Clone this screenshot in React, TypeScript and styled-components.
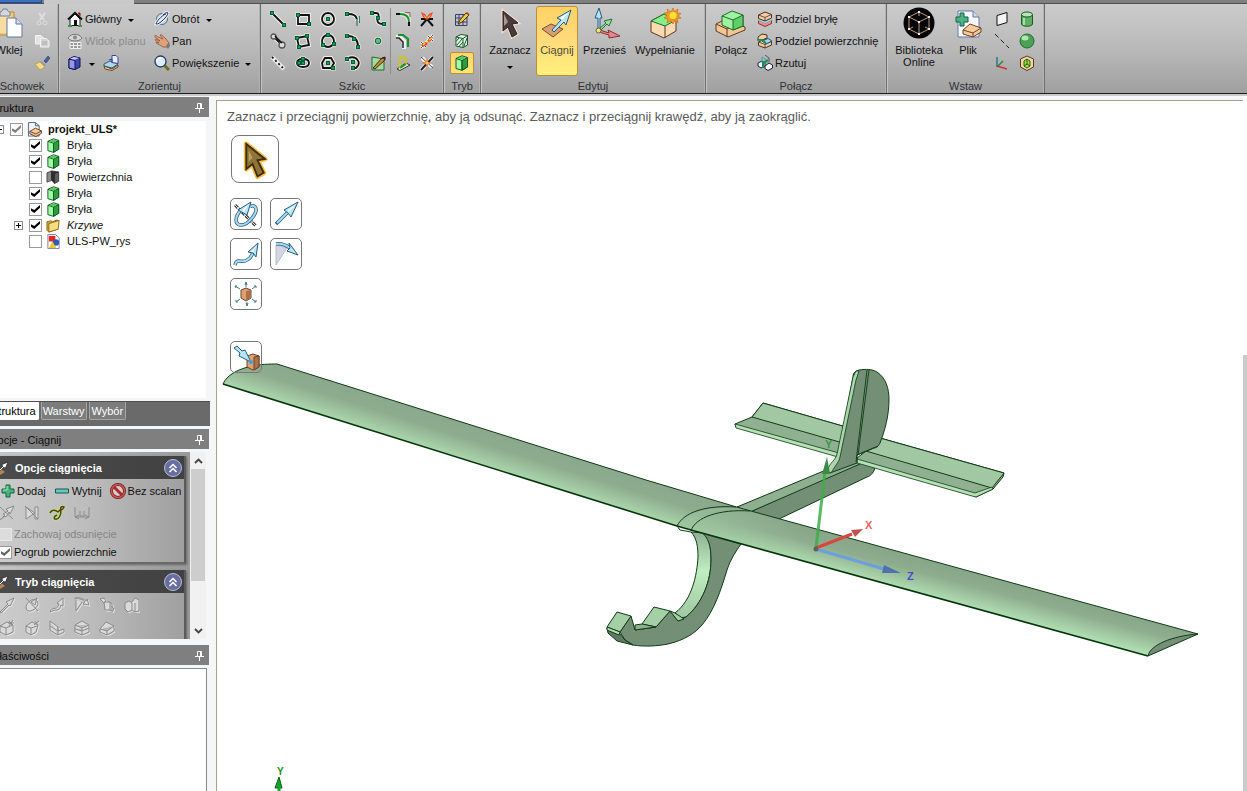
import React from "react";
import styled, { createGlobalStyle, css } from "styled-components";

const GlobalStyle = createGlobalStyle`
  * { box-sizing: border-box; }
  body { margin: 0; overflow: hidden; background: #f5f6f8; }
  button, input { font: inherit; color: inherit; margin: 0; }
`;

/* ---------- window ---------- */

const bleed = 14;

const Shell = styled.div`
  display: flex;
  flex-direction: column;
  height: 100vh;
  width: calc(100% + ${bleed}px);
  margin-left: -${bleed}px;
  font: 11px/14px "Liberation Sans", Arial, sans-serif;
  color: #111;
  background: #f5f6f8;
`;

const TabStrip = styled.div`
  display: flex;
  flex: none;
  gap: 2px;
  height: 4px;
  background: #7f7f7f;
  border-bottom: 1px solid #505050;
`;
const AppTab = styled.span`
  width: 56px;
  background: #3a70c0;
  border-bottom: 1px solid #1d4a92;
  border-right: 1px solid #1d4a92;
`;
const ActiveTab = styled.span`
  width: 90px;
  height: 4px;
  background: #c9c9c9;
`;

/* ---------- ribbon ---------- */

const RibbonBar = styled.header`
  display: flex;
  flex: none;
  height: 90px;
  background: linear-gradient(#cbcbcb, #b9b9b9 50%, #a0a0a0);
  border-bottom: 1px solid #1c1c1c;
`;
const Group = styled.section<{ $w: number }>`
  display: flex;
  flex-direction: column;
  flex: none;
  width: ${(p) => p.$w}px;
  border-right: 1px solid #6d6d6d;
  box-shadow: inset -2px 0 0 -1px #b4b4b4, inset 1px 0 0 #c6c6c6;
`;
const GroupBody = styled.div<{ $pad?: number }>`
  display: flex;
  flex: none;
  height: 74px;
  padding: 4px 0 0 ${(p) => p.$pad ?? 0}px;
`;
const GroupLabel = styled.h2`
  margin: 0;
  font-size: 11px;
  font-weight: 400;
  line-height: 17px;
  text-align: center;
  color: #2e3136;
`;
const bare = css`
  display: flex;
  align-items: center;
  padding: 0;
  border: 0;
  background: none;
  white-space: nowrap;
`;
const Column = styled.div<{ $w?: number }>`
  display: flex;
  flex-direction: column;
  flex: none;
  width: ${(p) => (p.$w ? p.$w + "px" : "auto")};
`;
const RowButton = styled.button`
  ${bare}
  gap: 2px;
  height: 22px;
  &:disabled { color: #8b8b8b; }
`;
const InlineRow = styled.div`
  display: flex;
  gap: 8px;
  height: 22px;
`;
const CellGrid = styled.div<{ $cols: number; $cell: number }>`
  display: grid;
  grid-template-columns: repeat(${(p) => p.$cols}, ${(p) => p.$cell}px);
  grid-auto-rows: 22px;
`;
const CellButton = styled.button<{ $on?: boolean }>`
  ${bare}
  justify-content: center;
  ${(p) =>
    p.$on &&
    css`
      border: 1px solid #b98f3a;
      border-radius: 2px;
      background: linear-gradient(#ffd470, #ffe476);
    `}
`;
const Rule = styled.span`
  width: 1px;
  height: 66px;
  background: #8e8e8e;
`;
const BigButton = styled.button<{ $w: number; $on?: boolean }>`
  ${bare}
  flex: none;
  flex-direction: column;
  align-self: flex-start;
  width: ${(p) => p.$w}px;
  height: 70px;
  margin-top: -2px;
  border: 1px solid transparent;
  border-radius: 3px;
  line-height: 12px;
  gap: 2px;
  ${(p) =>
    p.$on &&
    css`
      border-color: #c08e32;
      background: linear-gradient(#ffd266, #ffd97a 45%, #fff07c);
      color: #4e4a3c;
    `}
`;
const BigLabel = styled.span`
  padding-top: 3px;
  text-align: center;
`;
const Arrow = styled.i`
  width: 0;
  height: 0;
  margin: 2px 0 0 4px;
  border: 3px solid transparent;
  border-top-color: #000;
  border-bottom: 0;
`;
const DownArrow = styled(Arrow)`
  margin: 8px 0 0;
`;

/* ---------- work area ---------- */

const Work = styled.div`
  display: grid;
  grid-template-columns: 224px minmax(0, 1fr) 4px;
  flex: 1;
  min-height: 0;
  border-top: 2px solid #c9c9c9;
  background: #f5f6f8;
`;
const Side = styled.aside`
  display: flex;
  flex-direction: column;
  min-height: 0;
  padding-top: 1px;
`;
const PanelHead = styled.div`
  display: flex;
  flex: none;
  align-items: center;
  justify-content: space-between;
  height: 20px;
  margin-right: 1px;
  padding: 2px 5px 0 3px;
  background: #7f7f7f;
  color: #0c0c0c;
`;
const HeadTitle = styled.h2`
  margin: 0;
  font-size: 11px;
  font-weight: 400;
`;
const PinButton = styled.button`
  ${bare}
`;
const Tree = styled.ul`
  flex: none;
  height: 277px;
  margin: 4px 4px 3px 0;
  padding: 0;
  background: #fff;
  list-style: none;
`;
const TreeRow = styled.li<{ $depth: number }>`
  display: flex;
  align-items: center;
  height: 16px;
  padding-left: ${(p) => (p.$depth ? 28 : 9)}px;
`;
const Expander = styled.button<{ $open?: boolean }>`
  ${bare}
  flex: none;
  justify-content: center;
  width: 9px;
  height: 9px;
  margin-right: 6px;
  border: 1px solid #8d8d8d;
  background:
    linear-gradient(#000, #000) center / 5px 1px no-repeat,
    linear-gradient(#000, #000) center / 1px ${(p) => (p.$open ? 1 : 5)}px no-repeat,
    #fff;
`;
const ExpanderGap = styled.span`
  flex: none;
  width: 15px;
`;
const Tick = styled.input.attrs({ type: "checkbox" })<{ $tone?: string }>`
  appearance: none;
  display: grid;
  flex: none;
  place-items: center;
  width: 13px;
  height: 13px;
  border: 1px solid #9a9a9a;
  background: #fff;
  &:checked::before {
    content: "";
    width: 9px;
    height: 8px;
    background: ${(p) => p.$tone ?? "#000"};
    clip-path: polygon(0 40%, 0 72%, 36% 100%, 100% 34%, 100% 0, 36% 62%);
  }
  &:disabled { background: #dcdcdc; border-color: #e8e8e8; }
`;
const NodeLabel = styled.label<{ $look?: "bold" | "italic" }>`
  display: flex;
  align-items: center;
  gap: 6px;
  margin-left: 4px;
  font-weight: ${(p) => (p.$look === "bold" ? 700 : 400)};
  font-style: ${(p) => (p.$look === "italic" ? "italic" : "normal")};
`;
const Tabs = styled.div`
  display: flex;
  flex: none;
  align-items: flex-start;
  gap: 2px;
  height: 25px;
  background: #6a6a6a;
  border-top: 1px solid #4e4e4e;
  margin-bottom: 3px;
`;
const Tab = styled.button<{ $on?: boolean }>`
  ${bare}
  height: 18px;
  padding: 0 2px 0 1px;
  border: 1px solid ${(p) => (p.$on ? "#fff" : "#a5a5a5")};
  border-top: 0;
  border-radius: 0 0 2px 2px;
  background: ${(p) => (p.$on ? "#fff" : "#7c7c7c")};
  color: ${(p) => (p.$on ? "#000" : "#fff")};
  &:first-child { padding-left: 4px; }
`;
const Options = styled.div`
  display: flex;
  flex: none;
  height: 187px;
  margin: 3px 4px 6px 0;
  overflow: hidden;
`;
const Cards = styled.div`
  display: flex;
  flex: 1;
  flex-direction: column;
  gap: 6px;
  min-width: 0;
  padding: 4px 4px 0 0;
  background: linear-gradient(90deg, #c9c9c9, #999);
`;
const Card = styled.section`
  flex: none;
  border-right: 2px solid #5b5b5b;
  border-bottom: 2px solid #6a6a6a;
  box-shadow: 1px 1px 2px #666;
  background: linear-gradient(90deg, #cdcdcd, #bdbdbd 50%, #a0a0a0);
`;
const CardHead = styled.header`
  display: flex;
  align-items: center;
  gap: 6px;
  height: 23px;
  padding: 0 2px 0 9px;
  background: linear-gradient(90deg, #4c4c4c, #414141);
  color: #fff;
`;
const CardTitle = styled.h3`
  flex: 1;
  margin: 0;
  font-size: 11px;
  font-weight: 700;
`;
const FoldButton = styled.button`
  ${bare}
  justify-content: center;
  width: 18px;
  height: 18px;
  border: 1px solid #b9bdd8;
  border-radius: 50%;
  background: #676f9f;
`;
const CardBody = styled.div`
  padding: 1px 0 1px 13px;
`;
const OptionRow = styled.div`
  display: flex;
  gap: 8px;
  height: 22px;
  padding-left: 2px;
`;
const IconRow = styled.div`
  display: flex;
  gap: 9px;
  height: 23px;
`;
const CheckRow = styled.label<{ $off?: boolean }>`
  display: flex;
  align-items: center;
  gap: 2px;
  height: 18px;
  color: ${(p) => (p.$off ? "#868686" : "#111")};
`;
const ScrollTrack = styled.div`
  display: flex;
  flex: none;
  flex-direction: column;
  justify-content: space-between;
  width: 16px;
  background: #f1f1f1;
`;
const ScrollButton = styled.button`
  ${bare}
  justify-content: center;
  height: 17px;
`;
const ScrollThumb = styled.div`
  flex: none;
  height: 112px;
  margin: 0 1px auto 1px;
  background: #cdcdcd;
`;
const Properties = styled.div`
  flex: 1;
  margin: 3px 3px 0 0;
  border: 1px solid #8a8a8a;
  border-bottom: 0;
  background: #fff;
`;

/* ---------- viewport ---------- */

const Viewport = styled.main`
  position: relative;
  display: flex;
  flex-direction: column;
  align-items: flex-start;
  min-width: 0;
  margin: 4px 0 0 6px;
  padding: 8px 0 0 13px;
  border: 1px solid #a5a38e;
  border-width: 1px 0 0 1px;
  background: #fff;
  overflow: hidden;
`;
const Model = styled.svg`
  position: absolute;
  top: 0;
  left: 0;
`;
const Hint = styled.p`
  position: relative;
  margin: 0 0 10px -3px;
  font-size: 13px;
  line-height: 16px;
  white-space: nowrap;
  color: #5b5b5b;
`;
const Tools = styled.div`
  position: relative;
  display: grid;
  grid-template-columns: 32px 32px;
  gap: 8px;
  margin-top: 15px;
`;
const ToolButton = styled.button<{ $large?: boolean }>`
  ${bare}
  position: relative;
  justify-content: center;
  width: ${(p) => (p.$large ? 48 : 32)}px;
  height: ${(p) => (p.$large ? 48 : 32)}px;
  margin-left: ${(p) => (p.$large ? 1 : 0)}px;
  border: 1px solid #777;
  border-radius: ${(p) => (p.$large ? 8 : 5)}px;
`;
const UpTo = styled.div`
  margin-top: 31px;
`;
const PageScroll = styled.div`
  padding-top: 259px;
  background: #fff;
  &::after {
    content: "";
    display: block;
    height: 100%;
    background: #cbcbcb;
  }
`;

/* ---------- icons ---------- */

type IconProps = { s?: number; h?: number; vb?: number; children: React.ReactNode };
const Icon = ({ s = 16, h, vb, children }: IconProps) => (
  <svg width={s} height={h ?? s} viewBox={`0 0 ${vb ?? s} ${vb ?? h ?? s}`} fill="none" aria-hidden="true">
    {children}
  </svg>
);

/* black stroke with a pale outline and green handles */
const Sketch = ({ d, dots = [], dash, children }: { d?: string; dots?: number[][]; dash?: string; children?: React.ReactNode }) => (
  <Icon>
    {d && <path d={d} stroke="#ececec" strokeWidth="4" />}
    {dots.map(([x, y]) => (
      <rect key={`h${x},${y}`} x={x - 2.5} y={y - 2.5} width="5" height="5" fill="#eee" />
    ))}
    {d && <path d={d} stroke="#111" strokeWidth="1.8" strokeDasharray={dash} />}
    {dots.map(([x, y]) => (
      <rect key={`${x},${y}`} x={x - 1.5} y={y - 1.5} width="3" height="3" fill="#13a05b" stroke="#075c38" />
    ))}
    {children}
  </Icon>
);

const GreenBox = ({ s = 16 }: { s?: number }) => (
  <Icon s={s} vb={16}>
    <path d="M2 3.500 8 .8 13.500 2.500V12L8 15.300 2 13.500Z" fill="#a2fba2" stroke="#0c5a22" strokeLinejoin="round" />
    <path d="M8 5.500 13.500 2.500V12L8 15.300Z" fill="#319b3d" stroke="#0c5a22" strokeLinejoin="round" />
    <path d="M2 3.500 8 5.500V15" stroke="#0c5a22" />
    <path d="M3.300 3.500 8 1.500 12.200 2.700 8 4.800Z" fill="#56c75f" />
  </Icon>
);

const PlusIcon = () => (
  <Icon s={14}>
    <path d="M5 1h4v4h4v4H9v4H5V9H1V5h4Z" fill="#4db37e" stroke="#0d6244" />
    <path d="M6 2v4H2" stroke="#a9e5c0" />
  </Icon>
);

const PinIcon = () => (
  <Icon s={9} h={10}>
    <path d="M2.500 5.500V.5h4v5M0 5.500h9M4.500 5.500V10M5.500 1v4" stroke="#fff" />
  </Icon>
);

const HeaderArrow = () => (
  <Icon s={14}>
    <path d="M0 9 5 7 10 11 5 14 0 13Z" fill="#b38359" />
    <path d="M2 11 8 5 6 4 13 1 10 8 9 6 3 12Z" fill="#fff" stroke="#111" strokeWidth=".6" />
  </Icon>
);

const Chevrons = () => (
  <Icon s={10}>
    <path d="M1.500 5 5 1.500 8.500 5M1.500 9 5 5.500 8.500 9" stroke="#fff" strokeWidth="1.500" />
  </Icon>
);

const blue = { fill: "#b5e6f7", stroke: "#2b5c80", strokeWidth: 1, strokeLinejoin: "round" as const };
const grey = { stroke: "#8b8b8b", strokeWidth: 1, fill: "#dadada", strokeLinejoin: "round" as const };

const cursorPath = "M9 4 24 16 18 17 23 27 18 30 14 20 9 24Z";

const sketchTools: [string, React.ReactNode][] = [
  ["Linia", <Sketch d="M3 3 13 13" dots={[[2, 2], [14, 14]]} />],
  ["Prostokąt", <Sketch d="M3 4H14V13H3Z" dots={[[3, 4], [14, 13]]} />],
  ["Okrąg", <Sketch d="M8 2A6 6 0 1 1 8 14A6 6 0 1 1 8 2Z" dots={[[8, 8]]} />],
  ["Łuk styczny", <Sketch d="M3 3C8 3 12 4 12 10" dots={[[2, 3]]}><path d="M12 8v7" stroke="#888" strokeWidth="2" /><path d="M14.500 5v7" stroke="#178d55" /></Sketch>],
  ["Splajn", <Sketch d="M3 2H6C9 2 9 4 8 7S7 13 13 13" dots={[[2, 2], [8, 7], [14, 13]]} />],
  ["Linia styczna", <Sketch d="M4 4 12 12"><circle cx="3.500" cy="3.500" r="2.500" fill="#ddd" stroke="#555" strokeWidth="1.300" /><circle cx="12" cy="12" r="3" stroke="#555" fill="#ddd" strokeWidth="1.300" /><path d="M5 3 12 10" stroke="#111" strokeWidth="1.500" /></Sketch>],
  ["Prostokąt trójpunktowy", <Sketch d="M2 5 12 3 14 12 4 14Z" dots={[[2, 5], [12, 3], [4, 14]]} />],
  ["Okrąg trójpunktowy", <Sketch d="M8 2A6 6 0 1 1 8 14A6 6 0 1 1 8 2Z" dots={[[8, 2], [3, 12], [14, 11]]} />],
  ["Łuk trójpunktowy", <Sketch d="M3 3C9 3 13 7 13 13" dots={[[2, 3], [9, 6], [13, 14]]} />],
  ["Punkt", <Sketch><circle cx="8" cy="8" r="4" fill="#ddd" /><circle cx="8" cy="8" r="2.800" fill="#62bd7d" stroke="#08633c" /></Sketch>],
  ["Linia konstrukcyjna", <Sketch d="M2 2 14 14" dash="2 2.500" />],
  ["Elipsa", <Sketch d="M8 4C16 4 16 12 8 12S0 4 8 4Z" dots={[[8, 4], [4, 8], [8, 8]]} />],
  ["Wielokąt", <Sketch d="M2 8 5 3H11L14 8 11 13H3Z" dots={[[8, 8], [13, 13]]} />],
  ["Łuk wymiatany", <Sketch d="M3 3C12 0 17 8 11 13H8" dots={[[2, 4], [8, 7], [8, 13]]} />],
  ["Płaszczyzna", <Sketch><path d="M2 2 14 4V15H2Z" fill="#a9d8a4" stroke="#226b2b" /><path d="M3 13 12 3 15 3 14 6 5 14Z" fill="#b7922f" stroke="#3a2b0a" /><path d="m12 3 3-1v3" fill="#7c2222" stroke="#501010" /></Sketch>],
];

const trimTools: [string, React.ReactNode][] = [
  ["Zaokrąglij narożnik", <Icon><path d="M1 3H5M14 11v4" stroke="#111" strokeWidth="2" /><path d="M5 3C11 3 14 6 14 11" stroke="#e5eee5" strokeWidth="4" /><path d="M5 3C11 3 14 6 14 11" stroke="#179327" strokeWidth="2" /><path d="M10 1.500h5V6" stroke="#a45c5c" /></Icon>],
  ["Przytnij", <Icon><path d="M2 15 8 8 14 15M2 8 8 8 14 8" stroke="#111" strokeWidth="2" /><path d="m2 1 4 2 2 3 2-3 4-2-2 5-4 3-4-3Z" fill="#f0432a" /><path d="m4 3 4 4 4-4-2 4H6Z" fill="#ffc53c" /></Icon>],
  ["Odsuń krzywą", <Icon><path d="M1 4H5L9 8V16" stroke="#eee" strokeWidth="4" /><path d="M1 5H4L8 9V15" stroke="#222" strokeWidth="1.500" /><path d="M3 2H8L13 6V14" stroke="#189032" strokeWidth="2.200" /></Icon>],
  ["Rozdziel", <Icon><path d="m2 9 5 5M9 3l5 5M2 15 14 2" stroke="#eee" strokeWidth="3" /><path d="m2 9 5 5M9 3l5 5M2 15 14 2" stroke="#555" /><path d="m2 12 4-3 2 1 2-5 4-1-2 4-3 1-1 3-4 2Z" fill="#ef4927" /><path d="m4 12 2-2M10 7l3-2M7 9l2-1" stroke="#ffd340" strokeWidth="1.500" /></Icon>],
  ["Rzutuj na szkic", <Icon><path d="m2 14 3 1.500 10-5.500-4-2Z" fill="#dff2da" stroke="#333" /><path d="M5 1v12" stroke="#d6c500" strokeWidth="2" /><path d="M5 13 11 9" stroke="#1b9a33" strokeWidth="2" /><path d="m6 1 5 3v5" stroke="#d6c500" strokeWidth="1.500" /></Icon>],
  ["Podziel krzywą", <Icon><path d="M2 15 14 2M3 3l10 9" stroke="#eee" strokeWidth="4" /><path d="M2 15 14 2" stroke="#222" strokeWidth="2" /><path d="M2 2l12 11" stroke="#555" /><path d="m8 3 1 4 4 1-4 1-1 4-1-4-4-1 4-1Z" fill="#f4462b" /><circle cx="8" cy="8" r="1.800" fill="#ffc72e" /></Icon>],
];

const BoxSmall = ({ y = 0, fill = "#f3cda4" }: { y?: number; fill?: string }) => (
  <g transform={`translate(0 ${y})`}>
    <path d="M1.500 4 8 1 14.500 3.500V7L8 10 1.500 7.500Z" fill={fill} stroke="#4b3020" strokeLinejoin="round" />
    <path d="M1.500 4 8 6.500 14.500 3.500M8 6.500V10" stroke="#4b3020" strokeWidth=".8" />
  </g>
);

const splits: [string, React.ReactNode][] = [
  ["Podziel bryłę", <Icon><path d="M1.500 9 8 12 14.500 9V12.500L8 15.500 1.500 12.500Z" fill="#ee8c87" stroke="#8f2f33" /><path d="M1.500 8 8 11 14.500 8" stroke="#8fd4f2" strokeWidth="2.500" /><BoxSmall /></Icon>],
  ["Podziel powierzchnię", <Icon><BoxSmall y={5} /><path d="M5 8 11 5.500 15 8 9 11Z" fill="#9dd7f4" stroke="#245d7d" /><path d="M1 4 5 1 10 2 10 5 5 7 1 6.500Z" fill="#f3cda4" stroke="#4b3020" /><path d="M0 7h6l3 3" stroke="#159740" strokeWidth="1.500" /></Icon>],
  ["Rzutuj", <Icon><path d="M1 8 5 6 8 8V11L4 13 1 11ZM8 11 12 8 15.500 10V13L11 15.500 8 13.500Z" fill="#f3f3f3" stroke="#1d1d45" /><path d="M5 2v6M5 2l6 4M5 8l6-1" stroke="#35a7d2" /><path d="M6 13V8l5-3" stroke="#16923c" strokeWidth="2" /><path d="m8 0 4 3v4" stroke="#555" /></Icon>],
];

/* faint icons of the disabled option buttons */
const ghostPaths = [
  "M1 15 9 7 7 5 15 1 11 9 10 8 2 16Z",
  "M2 1 14 14M3 13C-1 8 9-1 13 4S6 17 3 13ZM7 5 13 1 11 8Z",
  "M1 14C5 9 8 14 10 7L8 6 14 1V9L12 8C10 16 6 11 2 15Z",
  "M1 2C6 1 9 3 11 5L9 7 15 8 13 2 12 4C8 1 4 0 1 1ZM2 3V14L8 5",
  "M1 2 5 1 7 4 5 6ZM5 5h6v8H6ZM11 5l2 2v7l-2-1M12 9l3 3-2 3",
  "M1 6 5 4 8 6V13L4 15 1 12ZM8 5 11 1 15 3V14L11 15 8 13M11 6V15",
  "M1 6 8 2 14 5V12L7 15 1 12ZM1 6 7 8V15M7 8 14 5M10 1l4 4M14 0l-4 6M9 3h6",
  "M2 6 8 2 14 5 12 12 7 15 2 12ZM2 6 7 8V15M7 8 13 6M11 1l3 4M15 1l-5 4",
  "M1 1V10L9 15 15 12V9L9 11 1 6M1 1 9 7V15M9 7V11",
  "M1 5 8 1 15 5V12L8 15 1 12ZM1 5 8 8 15 5M8 8V15M1 9 8 11 15 8",
  "M1 9 7 2 15 6V11L8 15 1 12ZM1 9 8 11 15 6M8 11V15",
];
const Ghost = ({ n }: { n: number }) => (
  <Icon>
    <path d={ghostPaths[n]} transform="translate(1 1)" stroke="#e6e6e6" />
    <path d={ghostPaths[n]} {...grey} />
  </Icon>
);

/* ---------- model ---------- */

const edge = "#113b16";
const dark = "#738f76";

const Airplane = () => (
  <Model width="1026" height="690" viewBox="217 101 1026 690" role="img" aria-label="projekt_ULS">
    <defs>
      <linearGradient id="leftWing" gradientUnits="userSpaceOnUse" x1="400" y1="402" x2="389" y2="437">
        <stop offset="0" stopColor="#8ba88c" />
        <stop offset=".4" stopColor="#8dac8e" />
        <stop offset="1" stopColor="#add8ae" />
      </linearGradient>
      <linearGradient id="rightWing" gradientUnits="userSpaceOnUse" x1="900" y1="552" x2="891" y2="586">
        <stop offset="0" stopColor="#87a588" />
        <stop offset=".4" stopColor="#8dad8e" />
        <stop offset="1" stopColor="#b1ddb2" />
      </linearGradient>
      <linearGradient id="rootGlow" gradientUnits="userSpaceOnUse" x1="690" y1="515" x2="800" y2="545">
        <stop offset="0" stopColor="#9ac09b" stopOpacity=".7" />
        <stop offset="1" stopColor="#9ac09b" stopOpacity="0" />
      </linearGradient>
      <linearGradient id="hook" x1="0" y1="0" x2="0" y2="1">
        <stop offset="0" stopColor="#8fb190" />
        <stop offset=".45" stopColor="#c0edc1" />
        <stop offset="1" stopColor="#a0c8a1" />
      </linearGradient>
    </defs>
    <g stroke={edge} strokeWidth="1" strokeLinejoin="round">
      {/* hook under the nose */}
      <path d="M691 532C697 538 698 548 698 557C697 575 692 600 675 613L680 618 686 617C703 603 711 580 711 560C711 547 709 538 705 533Z" fill="url(#hook)" />
      <path d="M700 531C709 537 711 547 711 560C711 580 703 603 686 617L678 621 670 611 656 627 635 630 631 616 620 632 625 640 633 645C645 647 658 646 668 644C685 640 695 633 702 625C714 611 721 590 727 570C730 560 736 551 741 544Z" fill={dark} />
      <path d="M607 628 608 633 617 641 633 645 625 640 619 633Z" fill="#5f7962" />
      <path d="M617 612 631 616 620 632 607 627Z" fill="#a5cfa6" />
      <path d="M607 627 620 632 619 635 607 630Z" fill="#b4e0b5" />
      <path d="M654 607 670 611 656 627 642 624Z" fill="#a5cfa6" />
      <path d="M635 625 642 624 656 627 635 630Z" fill="#8fb190" />
      <path d="M675 613 684 619 678 621 670 611Z" fill="#a5cfa6" />
      {/* tail boom */}
      <path d="M750 512 858 463 876 464 875 468C873 474 870 476 867 477L779 519Z" fill={dark} />
      <path d="M737 507 826 470 838 462 857 461 860 464 750 512Z" fill="#8fb090" />
      {/* tailplane */}
      <path d="M763 403 846 427 841 457 736 427 735 424 752 417Z" fill="#90b191" />
      <path d="M763 403 846 427 843 443 752 417Z" fill="#a2c8a3" />
      <path d="M735 424 839 453 838 457 736 428Z" fill="#b6e1b7" strokeWidth=".8" />
      <path d="M880 438 1004 473 1003 477 993 489 976 497 972 495 857 462 857 458 866 451Z" fill="#90b191" />
      <path d="M880 438 1004 473 992 488 866 451Z" fill="#a2c8a3" />
      <path d="M857 459 975 493 992 487 993 489 976 497 972 496 857 463Z" fill="#b6e1b7" strokeWidth=".8" />
      {/* fin */}
      <path d="M853 377C853 372 856 371 859 370C866 369 872 369 877 372C886 378 889 389 889 399C889 416 885 430 880 443C878 447 876 448 874 448L857 455V463L830 473 828 470 838 456Z" fill={dark} />
      <path d="M853 377 856 371 859 371 856 380 840 457C839 462 835 466 831 473L827 471C829 463 836 460 837 454Z" fill="#abd5ac" strokeWidth=".8" />
      <path d="M867 370 856 462M869 370 858 455M857 455 878 446" fill="none" strokeWidth=".9" />
      {/* wings */}
      <path d="M223 384C227 375 237 370 248 367C260 364 270 364 277 364L646 480 740 508 750 511 691 530 677 526Z" fill="url(#leftWing)" stroke="none" />
      <path d="M677 526C684 513 708 506 740 508L1198 634 1148 656 691 530Z" fill="url(#rightWing)" stroke="none" />
      <path d="M677 526C684 513 708 506 740 508L820 530 800 560 691 530Z" fill="url(#rootGlow)" stroke="none" />
      <path d="M223 384C227 375 237 370 248 367C260 364 270 364 277 364L646 480 740 508 1198 634" fill="none" />
      <path d="M223 384 677 526 691 530 1148 656" fill="none" stroke="#06340c" strokeWidth="1.600" />
      <path d="M1148 656C1150 645 1172 636 1198 634Z" fill={dark} />
      <path d="M677 526C684 512 706 505 736 507M691 531C695 517 720 509 750 511M677 526 680 530 691 532" fill="none" />
    </g>
    {/* origin triad */}
    <g fontFamily="Liberation Sans, Arial, sans-serif" fontSize="11" fontWeight="700">
      <path d="M816 548 825 472" stroke="#3fae46" strokeWidth="3" opacity=".85" />
      <path d="M827 457 822 474 830 474Z" fill="#3c8a43" />
      <path d="M816 548 852 534" stroke="#d9463e" strokeWidth="3" />
      <path d="M863 529 851 530 855 537Z" fill="#c35350" />
      <path d="M816 549 884 569" stroke="#6d9fdc" strokeWidth="3" />
      <path d="M901 573 884 565 882 573Z" fill="#4f73a8" />
      <circle cx="816" cy="549" r="2.500" fill="#5f5f5f" />
      <text x="825" y="448" fill="#3f9645">Y</text>
      <text x="865" y="529" fill="#f0625e">X</text>
      <text x="907" y="580" fill="#4650c8">Z</text>
      <text x="277" y="775" fill="#189126" fontSize="10">Y</text>
      <path d="M279 777 275 788H282Z" fill="#0fa62a" stroke="#0a5d18" />
      <path d="M279 787v6" stroke="#0fa62a" strokeWidth="3" />
    </g>
  </Model>
);

/* ---------- data ---------- */

type Node = { name: string; kind: string; on: boolean; look?: "bold" | "italic" };
const nodes: Node[] = [
  { name: "projekt_ULS*", kind: "design", on: true, look: "bold" },
  { name: "Bryła", kind: "solid", on: true },
  { name: "Bryła", kind: "solid", on: true },
  { name: "Powierzchnia", kind: "surface", on: false },
  { name: "Bryła", kind: "solid", on: true },
  { name: "Bryła", kind: "solid", on: true },
  { name: "Krzywe", kind: "folder", on: true, look: "italic" },
  { name: "ULS-PW_rys", kind: "image", on: false },
];

const NodeIcon = ({ kind }: { kind: string }) => {
  if (kind === "solid") return <GreenBox s={15} />;
  if (kind === "design")
    return (
      <Icon s={15} vb={16}>
        <path d="M1.500 .5H9L13 4V15H1.500Z" fill="#eef3fb" stroke="#4e5f88" />
        <path d="M9 .5V4H13" stroke="#4e5f88" />
        <path d="M3 10 9 6.500 15.500 9.500V12L9.500 15.500 3 12.500Z" fill="#f1c89d" stroke="#6b4426" />
        <path d="M3 10 9.500 12.800 15.500 9.500" stroke="#6b4426" />
      </Icon>
    );
  if (kind === "surface")
    return (
      <Icon s={15} vb={16}>
        <path d="M1 3 6 1V11L1 13Z" fill="#8a8a8a" stroke="#333" strokeWidth=".8" />
        <path d="M6 1 13 2 9 4V14L6 11Z" fill="#2f2f2f" stroke="#222" strokeWidth=".8" />
        <path d="M9 4 13.500 2V12L9 14.500Z" fill="#5d5d5d" stroke="#222" strokeWidth=".8" />
      </Icon>
    );
  if (kind === "folder")
    return (
      <Icon s={15} vb={16}>
        <path d="M1 4 5 3 7 4 12 2V12L3 15 1 13Z" fill="#d9a93a" stroke="#8a6514" />
        <path d="M3 6 14 2.500 13 12 3 15Z" fill="#f6dc83" stroke="#8a6514" />
      </Icon>
    );
  return (
    <Icon s={15} vb={16}>
      <path d="M2 .5H10L14 4V15.500H2Z" fill="#fff" stroke="#6f7fa8" />
      <path d="M3 2h7v6H3Z" fill="#e8251f" />
      <circle cx="10.500" cy="9" r="3.500" fill="#3458b8" />
      <path d="M3 15 7 8 11 15Z" fill="#f5c623" />
    </Icon>
  );
};

/* ---------- application ---------- */

const PanelHeader = ({ title }: { title: string }) => (
  <PanelHead>
    <HeadTitle>{title}</HeadTitle>
    <PinButton aria-label={`Przypnij ${title}`}><PinIcon /></PinButton>
  </PanelHead>
);

const Ribbon = () => (
  <RibbonBar>
    <Group $w={73}>
      <GroupBody>
        <BigButton $w={46}>
          <Icon s={32}>
            <path d="M3 5H21V28H3Z" fill="#f0c775" stroke="#b98835" />
            <path d="M6 8H18V26H6Z" fill="#f7dda2" />
            <path d="M7 6C7 4 10 5 10 2H14C14 5 17 4 17 6V9H7Z" fill="#d4d8de" stroke="#78808c" />
            <path d="M14 11H23L29 17V30H14Z" fill="#fbfdff" stroke="#64779e" />
            <path d="M23 11V17H29" fill="#cfdcf0" stroke="#64779e" />
          </Icon>
          <BigLabel>Wklej</BigLabel>
        </BigButton>
        <CellGrid $cols={1} $cell={19}>
          <CellButton aria-label="Wytnij"><Icon><path d="M5 2 10 9M11 2 6 9" stroke="#dedede" strokeWidth="2" /><circle cx="5" cy="12" r="2" stroke="#dedede" /><circle cx="11" cy="12" r="2" stroke="#dedede" /></Icon></CellButton>
          <CellButton aria-label="Kopiuj"><Icon><path d="M1.500 2.500H7L9.500 5V11H1.500Z" fill="#e4e4e4" stroke="#f2f2f2" /><path d="M6.500 5.500H12L15 8V14H6.500Z" fill="#d2d2d2" stroke="#f2f2f2" /><path d="M8 9h5M8 11h5" stroke="#aaa" /></Icon></CellButton>
          <CellButton aria-label="Malarz formatów"><Icon><path d="M10 6 14 1 16 3 12 8Z" fill="#4c5fa5" stroke="#2b3768" strokeWidth=".6" /><path d="M7 6 12 10 10 12 5 8Z" fill="#8f99b8" /><path d="M1 9 6 7 11 12 6 15Z" fill="#f4de83" stroke="#b2923a" strokeWidth=".7" /></Icon></CellButton>
        </CellGrid>
      </GroupBody>
      <GroupLabel>Schowek</GroupLabel>
    </Group>

    <Group $w={202}>
      <GroupBody $pad={8}>
        <Column $w={87}>
          <RowButton>
            <Icon><path d="M3 8V14.500H13V8L8 3Z" fill="#fff" stroke="#16164a" /><path d="M1 8.500 8 1.800 15 8.500" stroke="#111" strokeWidth="2" /><path d="M11 2h2v3" fill="#b22" stroke="#811" /><path d="M7 9h3v6H7Z" fill="#111" /><path d="M1 15h4M11 15h4" stroke="#3b9b3e" strokeWidth="2" /></Icon>
            Główny <Arrow />
          </RowButton>
          <RowButton disabled>
            <Icon><path d="M1 5C4 0 12 0 15 5C12 9 4 9 1 5Z" fill="#d5d5d5" stroke="#777" /><circle cx="8" cy="4.500" r="2" fill="#888" /><path d="M3 9.500H14V15.500H3ZM3 12.500H14M6.500 9V15M10.500 9V15" stroke="#eee" fill="#9a9a9a" /></Icon>
            Widok planu
          </RowButton>
          <InlineRow>
            <RowButton aria-label="Styl grafiki">
              <Icon><path d="M2 4 7 1.500 13 3V12L8 14.500 2 13Z" fill="#3f46ac" stroke="#10134f" /><path d="M2 4 8 5.500V14.500L2 13Z" fill="#9296ee" stroke="#10134f" /><path d="M3 3.800 7 2 12 3 8 4.800Z" fill="#c9ccfa" /></Icon>
              <Arrow />
            </RowButton>
            <RowButton aria-label="Widok szkicu">
              <Icon><path d="M1 9 7 6 15 9 9 13 1 11Z" fill="#a9daf0" stroke="#2c5874" /><path d="M1 11 9 14 15 10V12L9 15.500 2 14Z" fill="#f3d0a6" stroke="#6c4726" /><path d="M9 .5h4l2 2v6l-6-1Z" fill="#e8ecff" stroke="#3a46a0" /><path d="M9 8V4L6 5" stroke="#3a46a0" /></Icon>
            </RowButton>
          </InlineRow>
        </Column>
        <Column>
          <RowButton>
            <Icon><circle cx="8" cy="8" r="5.500" fill="#c6d4df" stroke="#5a7084" /><path d="M12 3C10 3 3 9 2 13C5 14 14 5 14 2C13 1 11 2 9 4" stroke="#e8eef5" strokeWidth="3" /><path d="M12 3C10 3 3 9 2 13C5 14 14 5 14 2C13 1 11 2 9 4" stroke="#1c3460" strokeWidth="1" /></Icon>
            Obrót <Arrow />
          </RowButton>
          <RowButton>
            <Icon><path d="M1 4C0 2 2 2 4 4L9 6 6 2C7 1 9 3 12 6L15 10 13 14H9C6 12 4 11 2 10 2 9 3 9 5 10L1 7C1 6 2 6 6 8Z" fill="#dfa17c" stroke="#915536" strokeWidth=".8" /><path d="M12 13 15 9 16 13 14 16Z" fill="#777" /></Icon>
            Pan
          </RowButton>
          <RowButton>
            <Icon><path d="M10 10 15 15" stroke="#6d6d1f" strokeWidth="3" /><circle cx="6.500" cy="6.500" r="5.500" fill="#dcecfb" stroke="#263a66" strokeWidth="1.300" /><path d="M3 6C3 4 5 3 7 3" stroke="#fff" strokeWidth="2" /></Icon>
            Powiększenie <Arrow />
          </RowButton>
        </Column>
      </GroupBody>
      <GroupLabel>Zorientuj</GroupLabel>
    </Group>

    <Group $w={183}>
      <GroupBody $pad={4}>
        <CellGrid $cols={5} $cell={25}>
          {sketchTools.map(([name, icon]) => <CellButton key={name} aria-label={name}>{icon}</CellButton>)}
        </CellGrid>
        <Rule />
        <CellGrid $cols={2} $cell={24}>
          {trimTools.map(([name, icon]) => <CellButton key={name} aria-label={name}>{icon}</CellButton>)}
        </CellGrid>
      </GroupBody>
      <GroupLabel>Szkic</GroupLabel>
    </Group>

    <Group $w={37}>
      <GroupBody $pad={6}>
        <CellGrid $cols={1} $cell={24}>
          <CellButton aria-label="Tryb szkicu"><Icon><path d="M1.500 3.500H13V14.500H1.500ZM1.500 7H13M1.500 11H13M5 3V14M9 3V14" stroke="#36416e" /><path d="M4 13 6 9 12 2 15 4 8 11Z" fill="#f4cf3a" stroke="#4a3a08" /><path d="M12 2 13 1 15.500 3 15 4Z" fill="#c33" /></Icon></CellButton>
          <CellButton aria-label="Tryb przekroju"><Icon><path d="M2 4 7 1.500 13.500 2.500V12L9 14.500 2 13Z" fill="#ecf6ec" stroke="#0c5a22" /><path d="M2 4 9 5.500V14.500M9 5.500 13.500 2.500M3 12 8 6M5 13.500 9 9M10 13 13 5M2.500 8 5 5" stroke="#0c5a22" /></Icon></CellButton>
          <CellButton $on aria-label="Tryb 3D"><GreenBox /></CellButton>
        </CellGrid>
      </GroupBody>
      <GroupLabel>Tryb</GroupLabel>
    </Group>

    <Group $w={225}>
      <GroupBody $pad={3}>
        <BigButton $w={52}>
          <Icon s={32}><path d={cursorPath} fill="#f1ddd2" stroke="#f1ddd2" strokeWidth="3" /><path d={cursorPath} fill="#4a3b38" stroke="#2c211f" /><path d="M10 7V19L14 15Z" fill="#a39a98" /></Icon>
          <BigLabel>Zaznacz</BigLabel>
          <DownArrow />
        </BigButton>
        <BigButton $w={42} $on>
          <Icon s={32}><path d="M1 22 10 17 22 22 12 30Z" fill="#d8a070" stroke="#7c4f2b" /><path d="M11 23 20 13 16 11 30 3 25 18 23 15 13 25Z" {...blue} /><path d="M19 11 28 5 21 13Z" fill="#fff" /></Icon>
          <BigLabel>Ciągnij</BigLabel>
        </BigButton>
        <BigButton $w={53}>
          <Icon s={32}>
            <path d="M9 23V11H6L10 1 13 11H11V23Z" {...blue} />
            <path d="M11 21 17 16 15 14 23 12 20 19 18 17 12 23Z" fill="#93e19c" stroke="#2b6e3b" />
            <path d="M11 23 20 26 19 23 31 29 20 31V28L10 25Z" fill="#e58a8c" stroke="#8d2d35" />
            <circle cx="9.500" cy="23.500" r="2.500" fill="#ece37f" stroke="#6b6630" />
          </Icon>
          <BigLabel>Przenieś</BigLabel>
        </BigButton>
        <BigButton $w={68}>
          <Icon s={32}>
            <path d="M2 14 15 7 27 13V24L15 31 2 25Z" fill="#fbd9b2" stroke="#5b3b22" />
            <path d="M2 14 15 7 27 13 16 19Z" fill="#87ee8b" stroke="#1d6a2a" />
            <path d="M16 19V31" stroke="#5b3b22" />
            <path d="m24 1 1.500 3.500L29 2l-1 4 4 .5-3 2.500 3 2-4 .5 1 4-3.500-2L24 17l-2-3-4 2 1-4-4-1 3-2-3-3 4-.5L18 2l4 3Z" fill="#f59a1e" stroke="#c46a10" strokeWidth=".6" />
            <circle cx="24" cy="8.500" r="3.500" fill="#ffe03a" />
          </Icon>
          <BigLabel>Wypełnianie</BigLabel>
        </BigButton>
      </GroupBody>
      <GroupLabel>Edytuj</GroupLabel>
    </Group>

    <Group $w={181}>
      <GroupBody $pad={3}>
        <BigButton $w={44}>
          <Icon s={32}>
            <path d="M1 17 9 13 30 20V23L13 30 1 24Z" fill="#f3c595" stroke="#5b3b22" />
            <path d="M1 17 12 22V30M12 22 16 20" stroke="#5b3b22" />
            <path d="M7 9 17 4 28 8V19L18 23 7 18Z" fill="#a0f2a3" stroke="#1d6a2a" />
            <path d="M18 13 28 8V19L18 23Z" fill="#5fcf68" stroke="#1d6a2a" />
            <path d="M7 9 18 13" stroke="#1d6a2a" />
          </Icon>
          <BigLabel>Połącz</BigLabel>
        </BigButton>
        <Column $w={4} />
        <Column>
          {splits.map(([name, icon]) => <RowButton key={name}>{icon}{name}</RowButton>)}
        </Column>
      </GroupBody>
      <GroupLabel>Połącz</GroupLabel>
    </Group>

    <Group $w={158}>
      <GroupBody $pad={4}>
        <BigButton $w={56}>
          <Icon s={32}>
            <circle cx="16" cy="16" r="15.500" fill="#050505" />
            <path d="M16 5 26 10V22L16 27 6 22V10ZM6 10 16 15 26 10M16 15V27M16 5V9M6 22 10 20M26 22 22 20" stroke="#b99b86" />
            <path d="M15 4h2v2h-2ZM5 9h2v2H5ZM25 9h2v2h-2ZM15 14h2v2h-2ZM15 26h2v2h-2ZM5 21h2v2H5ZM25 21h2v2h-2Z" fill="#f5e6d6" />
          </Icon>
          <BigLabel>Biblioteka<br />Online</BigLabel>
        </BigButton>
        <BigButton $w={42}>
          <Icon s={32}>
            <path d="M6 4H21L27 10V30H6Z" fill="#f6f8fc" stroke="#6579a3" />
            <path d="M21 4V10H27" fill="#cdd9ec" stroke="#6579a3" />
            <path d="M8 6h4v4h4v5h-4v4H8v-4H4v-5h4Z" fill="#51b083" stroke="#0d6244" />
            <path d="M11 23 18 17 29 21V25L21 30 11 27Z" fill="#f8c99b" stroke="#6b4426" />
            <path d="M11 23 21 26 29 21M21 26V30" stroke="#6b4426" />
          </Icon>
          <BigLabel>Plik</BigLabel>
        </BigButton>
        <CellGrid $cols={2} $cell={25}>
          <CellButton aria-label="Płaszczyzna"><Icon><path d="M3 4.500 13 1.500V11.500L3 14.500Z" fill="#f4f4f4" stroke="#111" /></Icon></CellButton>
          <CellButton aria-label="Walec"><Icon><path d="M2.500 3.500V13C3 16 13 16 13.500 13V3.500Z" fill="#5fae66" stroke="#1c5a26" /><ellipse cx="8" cy="3.500" rx="5.500" ry="2.500" fill="#b9e5b6" stroke="#1c5a26" /><path d="M5 7v7" stroke="#a9dba8" strokeWidth="2" /></Icon></CellButton>
          <CellButton aria-label="Oś"><Icon><path d="M1 1 15 15" stroke="#222" strokeDasharray="5 3" /></Icon></CellButton>
          <CellButton aria-label="Kula"><Icon><circle cx="8" cy="8" r="7" fill="#4aa152" stroke="#1f6e2c" /><ellipse cx="6" cy="5" rx="3.500" ry="2.500" fill="#b6e2b4" /></Icon></CellButton>
          <CellButton aria-label="Początek układu"><Icon><path d="M3 2V12" stroke="#28788e" strokeWidth="1.500" /><path d="M3 12 9 6" stroke="#258a3b" strokeWidth="1.500" /><path d="M3 11 13 14" stroke="#c9343a" strokeWidth="1.500" /></Icon></CellButton>
          <CellButton aria-label="Skorupa"><Icon><path d="M1.500 4 8 1 14.500 4V12L8 15.500 1.500 12Z" fill="#f1d6a6" stroke="#5b3b12" /><path d="M5 6 8 4 11 6V11L8 13 5 11Z" fill="#9dde4a" stroke="#2e5c10" /><path d="M8 4V9M5 11 8 9 11 11" stroke="#2e5c10" /></Icon></CellButton>
        </CellGrid>
      </GroupBody>
      <GroupLabel>Wstaw</GroupLabel>
    </Group>
  </RibbonBar>
);

const Structure = () => (
  <>
    <PanelHeader title="Struktura" />
    <Tree>
      {nodes.map((n, i) => (
        <TreeRow key={i} $depth={i ? 1 : 0}>
          {i === 0 || n.kind === "folder" ? <Expander $open={i === 0} aria-label={`Rozwiń ${n.name}`} /> : <ExpanderGap />}
          <Tick id={`node${i}`} defaultChecked={n.on} $tone={i === 0 ? "#808080" : "#000"} />
          <NodeLabel htmlFor={`node${i}`} $look={n.look}><NodeIcon kind={n.kind} />{n.name}</NodeLabel>
        </TreeRow>
      ))}
    </Tree>
    <Tabs>
      <Tab $on>Struktura</Tab>
      <Tab>Warstwy</Tab>
      <Tab>Wybór</Tab>
    </Tabs>
  </>
);

const OptionsPanel = () => (
  <>
    <PanelHeader title="Opcje - Ciągnij" />
    <Options>
      <Cards>
        <Card>
          <CardHead>
            <HeaderArrow />
            <CardTitle>Opcje ciągnięcia</CardTitle>
            <FoldButton aria-label="Zwiń opcje ciągnięcia"><Chevrons /></FoldButton>
          </CardHead>
          <CardBody>
            <OptionRow>
              <RowButton><PlusIcon />Dodaj</RowButton>
              <RowButton><Icon><path d="M1.500 6H14.500V10H1.500Z" fill="#6fc5bb" stroke="#0d5a58" /></Icon>Wytnij</RowButton>
              <RowButton><Icon><circle cx="8" cy="8" r="6.500" stroke="#702020" strokeWidth="3" fill="#e5c5c5" /><circle cx="8" cy="8" r="6.500" stroke="#c95454" strokeWidth="1.500" /><path d="M4 4 12 12" stroke="#9f3030" strokeWidth="3" /></Icon>Bez scalan</RowButton>
            </OptionRow>
            <IconRow>
              <RowButton disabled aria-label="Ciągnij w obie strony"><Icon><path d="M1 15 6 10 4 9 9 6 7 4 15 1 11 9 10 7 7 12 6 11ZM1 2 14 14" {...grey} /></Icon></RowButton>
              <RowButton disabled aria-label="Pełne ciągnięcie"><Icon><path d="M2 2V14L11 8ZM11 2H14V14H11ZM1 1 14 14" {...grey} /></Icon></RowButton>
              <RowButton aria-label="Mierz"><Icon><path d="M1 8C3 4 7 5 9 7L12 4C11 2 13 1 15 2C14 4 13 5 12 5C12 10 10 15 6 14C4 13 6 11 8 10" stroke="#b8e08a" strokeWidth="3.500" /><path d="M1 8C3 4 7 5 9 7L12 4C11 2 13 1 15 2C14 4 13 5 12 5C12 10 10 15 6 14C4 13 6 11 8 10" stroke="#5a3d10" strokeWidth="1.500" /></Icon></RowButton>
              <RowButton disabled aria-label="Linijka"><Icon><path d="M1 2V12H15V2M5 10 1 12 5 14M11 10 15 12 11 14M6 6v5h4V6" {...grey} fill="none" /></Icon></RowButton>
            </IconRow>
            <CheckRow $off><Tick disabled />Zachowaj odsunięcie</CheckRow>
            <CheckRow><Tick defaultChecked $tone="#666" />Pogrub powierzchnie</CheckRow>
          </CardBody>
        </Card>
        <Card>
          <CardHead>
            <HeaderArrow />
            <CardTitle>Tryb ciągnięcia</CardTitle>
            <FoldButton aria-label="Zwiń tryb ciągnięcia"><Chevrons /></FoldButton>
          </CardHead>
          <CardBody>
            <IconRow>{[0, 1, 2, 3, 4, 5].map((n) => <RowButton key={n} disabled aria-label={`Tryb ${n + 1}`}><Ghost n={n} /></RowButton>)}</IconRow>
            <IconRow>{[6, 7, 8, 9, 10].map((n) => <RowButton key={n} disabled aria-label={`Tryb ${n + 1}`}><Ghost n={n} /></RowButton>)}</IconRow>
          </CardBody>
        </Card>
      </Cards>
      <ScrollTrack>
        <ScrollButton aria-label="W górę"><Icon s={9} h={6}><path d="M1 5 4.500 1.500 8 5" stroke="#444" strokeWidth="1.800" /></Icon></ScrollButton>
        <ScrollThumb />
        <ScrollButton aria-label="W dół"><Icon s={9} h={6}><path d="M1 1 4.500 4.500 8 1" stroke="#444" strokeWidth="1.800" /></Icon></ScrollButton>
      </ScrollTrack>
    </Options>
  </>
);

const Scene = () => (
  <Viewport>
    <Airplane />
    <Hint>Zaznacz i przeciągnij powierzchnię, aby ją odsunąć. Zaznacz i przeciągnij krawędź, aby ją zaokrąglić.</Hint>
    <ToolButton $large aria-label="Zaznacz">
      <Icon s={40} vb={32}><path d={cursorPath} stroke="#ffc04a" strokeWidth="4" strokeLinejoin="round" /><path d={cursorPath} fill="#8f7437" stroke="#3d2d10" strokeWidth="1.500" /><path d="M11 9V18L14 15Z" fill="#bda264" /></Icon>
    </ToolButton>
    <Tools>
      <ToolButton aria-label="Obróć">
        <Icon s={26}><path d="M2 4 23 25" stroke="#444" strokeWidth="3" strokeDasharray="4 1" /><path d="M2 4 23 25" stroke="#ddd" /><path d="M8 9C2 15 1 24 8 24C16 24 26 10 22 6C20 4 18 5 17 6" stroke="#2b5c80" strokeWidth="3.500" /><path d="M8 9C2 15 1 24 8 24C16 24 26 10 22 6C20 4 18 5 17 6" stroke="#a9dcf2" strokeWidth="2" /><path d="M5 9 18 1 14 14Z" {...blue} /><path d="M9 9 16 3 11 11Z" fill="#fff" /></Icon>
      </ToolButton>
      <ToolButton aria-label="Kierunek">
        <Icon s={26}><path d="M3 23 14 12" stroke="#2b5c80" strokeWidth="3.500" /><path d="M4 22 15 11" stroke="#a9dcf2" strokeWidth="2" /><path d="M11 9 25 1 18 16 15 12Z" {...blue} /><path d="M15 9 23 3 16 11Z" fill="#fff" /></Icon>
      </ToolButton>
      <ToolButton aria-label="Wyciągnij">
        <Icon s={26}><path d="M2 24C4 16 9 23 14 19C18 17 19 15 20 11" stroke="#2b5c80" strokeWidth="3.500" /><path d="M2 24C4 16 9 23 14 19C18 17 19 15 20 11" stroke="#a9dcf2" strokeWidth="2" /><path d="M15 11 25 2 23 16 20 12Z" {...blue} /><path d="M18 11 23 5 20 11Z" fill="#fff" /></Icon>
      </ToolButton>
      <ToolButton aria-label="Pochyl">
        <Icon s={26}><path d="M3 4 14 7 3 24Z" fill="#d4d6e2" stroke="#b9bccb" /><path d="M3 3C9 2 13 4 17 7" stroke="#2b5c80" strokeWidth="3.500" /><path d="M3 3C9 2 13 4 17 7" stroke="#a9dcf2" strokeWidth="2" /><path d="M16 2 25 14 14 10 17 7Z" {...blue} /></Icon>
      </ToolButton>
      <ToolButton aria-label="Skaluj">
        <Icon s={26}><path d="M8 9 13 7 18 9V17L13 20 8 17Z" fill="#dda173" stroke="#6f4526" /><path d="M13 10 18 9V17L13 20Z" fill="#a8734b" /><path d="M13 6V1M12 4l1-3 1 3M14 21v4M13 22l1 3 1-3M7 8 2 5M3 7 2 5H4M19 8l4-3M21 5h2v2M7 18l-4 3M3 19v2h2M19 18l4 3M21 21h2v-2" stroke="#447d98" /></Icon>
      </ToolButton>
    </Tools>
    <UpTo>
      <ToolButton aria-label="Do elementu">
        <Icon s={28}><path d="M15 13 21 11 27 13V24L21 27 15 24Z" fill="#dda173" stroke="#6f4526" /><path d="M22 14 27 13V24L22 27Z" fill="#a8734b" stroke="#6f4526" /><path d="M2 5 5 3 10 8 13 7 19 19 7 13 8 10Z" {...blue} /><circle cx="19" cy="19" r="2" fill="#31a4e8" /></Icon>
      </ToolButton>
    </UpTo>
  </Viewport>
);

export default function App() {
  return (
    <>
      <GlobalStyle />
      <Shell>
        <TabStrip><AppTab /><ActiveTab /></TabStrip>
        <Ribbon />
        <Work>
          <Side>
            <Structure />
            <OptionsPanel />
            <PanelHeader title="Właściwości" />
            <Properties />
          </Side>
          <Scene />
          <PageScroll />
        </Work>
      </Shell>
    </>
  );
}
